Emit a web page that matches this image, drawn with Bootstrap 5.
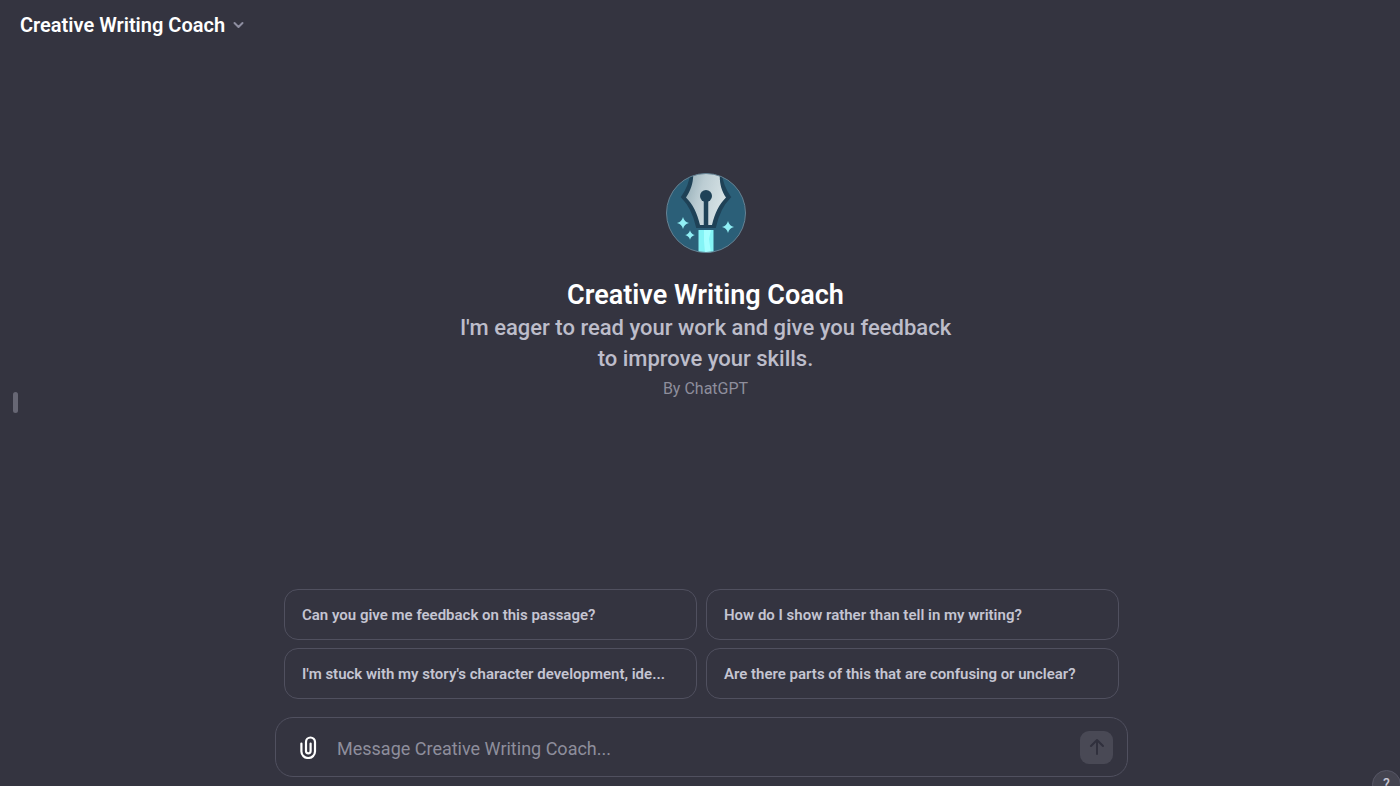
<!DOCTYPE html>
<html lang="en">
<head>
<meta charset="utf-8">
<meta name="viewport" content="width=device-width, initial-scale=1">
<title>Creative Writing Coach</title>
<link href="https://cdn.jsdelivr.net/npm/bootstrap@5.3.0/dist/css/bootstrap.min.css" rel="stylesheet">
<style>
  body { background: #343440; color: #fff; font-family: Roboto, "Liberation Sans", sans-serif; overflow-x: hidden; }
  .model-btn { font-size: 20px; line-height: 26px; font-weight: 600; color: #fff; border: 0; }
  .model-btn:hover { color: #fff; }
  .hero { padding: 0 0 54px 11px; }
  .hero-title { font-size: 27px; line-height: 34px; font-weight: 600; margin: 25px 0 0; }
  .hero-text { font-size: 22px; line-height: 31px; font-weight: 500; color: #bdbdca; max-width: 510px; }
  .hero-by { font-size: 16px; line-height: 30px; color: #8e8e9c; }
  .side-handle { left: 13px; top: 392px; width: 5px; height: 21px; border-radius: 3px; background: #676774; }
  .dock-area { padding-left: 3px; }
  .dock { max-width: 853px; padding-bottom: 9px; }
  .prompts { gap: 8px 9px; display: grid; grid-template-columns: 1fr 1fr; padding: 0 9px; margin-bottom: 18px; }
  .prompt-btn { height: 51px; border: 1px solid #50505f; border-radius: 14px; padding: 2px 17px 0; font-size: 15px; font-weight: 600; color: #c5c5d2; }
  .prompt-btn:hover { color: #fff; border-color: #777785; }
  .composer { height: 60px; border: 1px solid #50505f; border-radius: 18px; padding: 0 14px 0 20px; }
  .composer-input, .composer-input:focus { background: transparent; border: 0; box-shadow: none; color: #fff; font-size: 18px; padding: 2px 0 0; margin-left: 17px; }
  .composer-input::placeholder { color: #8e8e9c; }
  .send-btn, .send-btn:disabled { width: 33px; height: 33px; border-radius: 9px; background: #494955; border: 0; opacity: 1; }
  .help-btn { right: -1px; bottom: -13px; width: 29px; height: 29px; background: #444450; border: 1px solid #565665; color: #c5c5d2; font-size: 14px; font-weight: 500; }
</style>
</head>
<body class="d-flex flex-column min-vh-100">
<header class="d-flex px-2 pt-2">
  <button type="button" class="btn model-btn d-flex align-items-center gap-2 py-1 px-2 ms-1">
    Creative Writing Coach
    <svg width="11" height="8" viewBox="0 0 11 8" fill="none" stroke="#8e8ea0" stroke-width="2" stroke-linecap="round" stroke-linejoin="round" aria-hidden="true"><path d="M1.5 2 5.5 6l4-4"/></svg>
  </button>
</header>
<div class="side-handle position-fixed"></div>
<main class="hero flex-grow-1 d-flex flex-column align-items-center justify-content-center text-center">
  <svg width="80" height="80" viewBox="0 0 80 80" role="img" aria-label="Fountain pen nib">
    <defs>
      <clipPath id="disc"><circle cx="40" cy="40" r="39.5"/></clipPath>
      <linearGradient id="steel" x1="0" y1="0" x2="1" y2="0.4"><stop offset="0" stop-color="#8fa9b3"/><stop offset=".45" stop-color="#bccdd3"/><stop offset="1" stop-color="#d6e2e5"/></linearGradient>
      <path id="spark" d="M0-6Q1.2-1.2 6 0 1.2 1.2 0 6-1.2 1.2-6 0-1.2-1.2 0-6Z"/>
    </defs>
    <g clip-path="url(#disc)">
      <rect width="80" height="80" fill="#2b5f78"/>
      <path d="M25-2C25 9 21 17 16 24c7 7 12 16 15 30h18c3-14 8-23 15-30-5-7-9-15-9-26Z" fill="#1f4257" stroke="#1f4257" stroke-width="2"/>
      <path d="M27-2C28 9 25 17 20 24.500c7 7 11 15 14 27.500h12c3-12.500 7-20.500 14-27.500C55 17 53 9 54-2Z" fill="url(#steel)"/>
      <path d="M40 24v30" stroke="#1f4257" stroke-width="4.500"/>
      <circle cx="40" cy="23" r="6" fill="#1f4257"/>
      <rect x="32.500" y="57" width="15" height="24" fill="#84f4f6"/>
      <path d="M38 57h7l-2 9 2 14h-6l-1-12Z" fill="#a5ffff"/>
      <g fill="#91eff5"><use href="#spark" x="17" y="50"/><use href="#spark" x="62" y="54"/><use href="#spark" transform="translate(24 62) scale(.8)"/></g>
    </g>
    <circle cx="40" cy="40" r="39.500" fill="none" stroke="#668293"/>
  </svg>
  <h1 class="hero-title">Creative Writing Coach</h1>
  <p class="hero-text mb-0">I'm eager to read your work and give you feedback to improve your skills.</p>
  <div class="hero-by">By ChatGPT</div>
</main>
<footer class="dock-area">
  <div class="dock mx-auto">
    <div class="prompts">
      <button type="button" class="btn prompt-btn text-start text-truncate">Can you give me feedback on this passage?</button>
      <button type="button" class="btn prompt-btn text-start text-truncate">How do I show rather than tell in my writing?</button>
      <button type="button" class="btn prompt-btn text-start text-truncate">I'm stuck with my story's character development, ide...</button>
      <button type="button" class="btn prompt-btn text-start text-truncate">Are there parts of this that are confusing or unclear?</button>
    </div>
    <form class="composer d-flex align-items-center">
      <button type="button" class="btn p-0 border-0 d-flex" aria-label="Attach files">
        <svg width="24" height="24" viewBox="0 0 24 24" fill="none" stroke="#fff" stroke-width="2.200" stroke-linecap="round" aria-hidden="true"><path d="M5.400 8.500v8a6.800 6.500 0 0 0 13.600 0V7a4.500 4.500 0 0 0-9 0V16a2.300 2.300 0 0 0 4.600 0V8.500"/></svg>
      </button>
      <input type="text" class="form-control composer-input" placeholder="Message Creative Writing Coach..." aria-label="Message Creative Writing Coach">
      <button type="submit" class="btn send-btn p-0 flex-shrink-0 d-flex align-items-center justify-content-center" aria-label="Send message" disabled>
        <svg width="18" height="18" viewBox="0 0 18 18" fill="none" stroke="#30303d" stroke-width="2" stroke-linecap="round" stroke-linejoin="round" aria-hidden="true"><path d="M9 16V2M3 8l6-6 6 6"/></svg>
      </button>
    </form>
  </div>
</footer>
<button type="button" class="btn help-btn rounded-circle position-fixed p-0" aria-label="Help">?</button>
<script src="https://cdn.jsdelivr.net/npm/bootstrap@5.3.0/dist/js/bootstrap.bundle.min.js"></script>
</body>
</html>
